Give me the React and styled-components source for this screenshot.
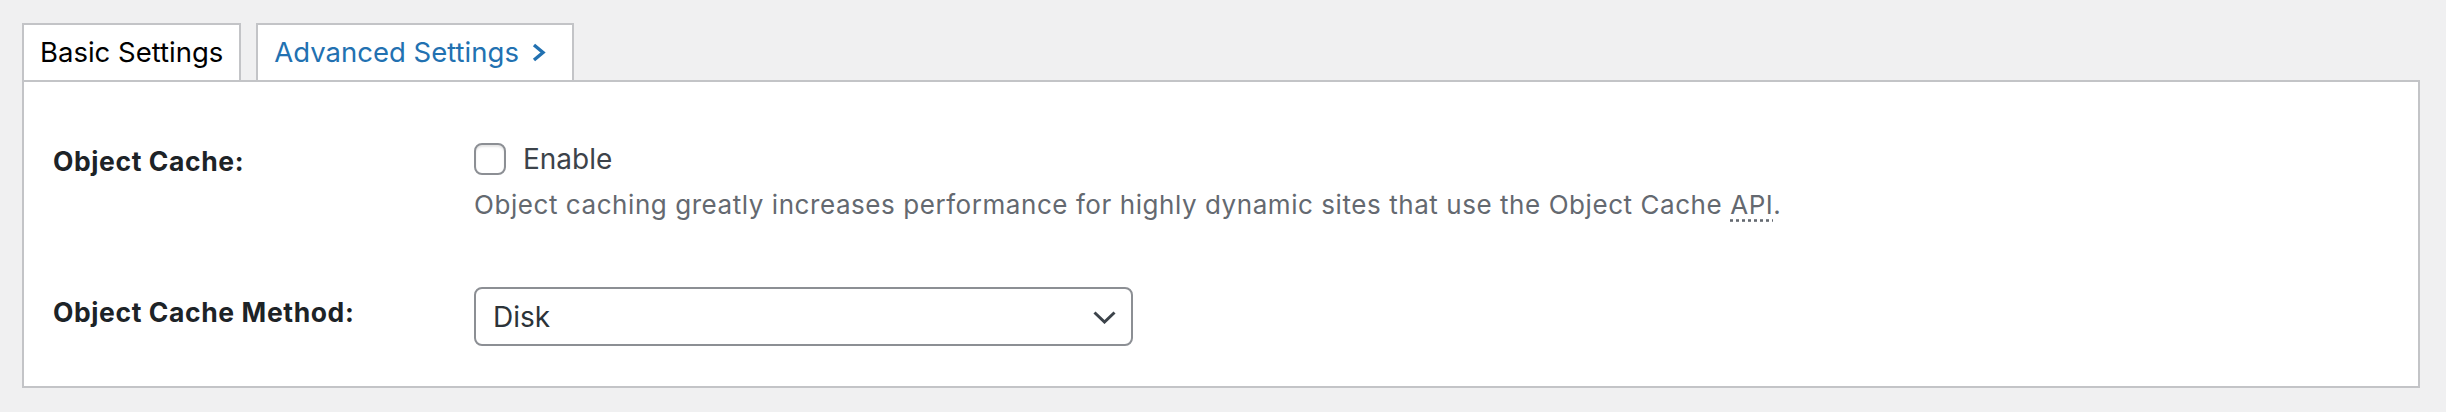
import styled, { createGlobalStyle } from 'styled-components';

const GlobalStyle = createGlobalStyle`
  html, body {
    margin: 0;
    background: #f0f0f1;
  }
  body {
    font-family: Inter, "Liberation Sans", sans-serif;
    color: #3c434a;
  }
`;

const Page = styled.div`
  padding: 23px 26px 24px 22px;
`;

const TabBar = styled.nav`
  display: flex;
  gap: 15px;
  align-items: flex-end;
`;

const Tab = styled.a`
  display: flex;
  align-items: center;
  gap: 12px;
  height: 55px;
  padding: 0 ${p => (p.$withArrow ? '26px' : '16px')} 0 16px;
  background: #fff;
  border: 2px solid #c3c4c7;
  border-bottom: none;
  font-size: 27.5px;
  line-height: 1;
  text-decoration: none;
  color: ${p => (p.$active ? '#000' : '#2271b1')};
  cursor: pointer;
`;

const Panel = styled.section`
  background: #fff;
  border: 2px solid #c3c4c7;
  padding: 61px 29px 40px;
`;

const FormRow = styled.div`
  display: grid;
  grid-template-columns: 421px 1fr;
  align-items: start;

  & + & {
    margin-top: 65px;
  }
`;

const Label = styled.label`
  padding-top: ${p => p.$offset || 0}px;
  font-size: 26.5px;
  line-height: 34px;
  font-weight: 700;
  letter-spacing: 0.6px;
  color: #1d2327;
`;

const Field = styled.div`
  display: flex;
  flex-direction: column;
`;

const CheckLine = styled.label`
  display: flex;
  align-items: center;
  gap: 17px;
  font-size: 28px;
  line-height: 32px;
  color: #3c434a;
`;

const Checkbox = styled.input.attrs({ type: 'checkbox' })`
  appearance: none;
  margin: 0;
  width: 32px;
  height: 32px;
  border: 2px solid #8c8f94;
  border-radius: 8px;
  background: #fff;
  box-shadow: inset 0 2px 2px rgba(0, 0, 0, 0.1);
`;

const Description = styled.p`
  margin: 13px 0 0;
  font-size: 26px;
  line-height: 34px;
  letter-spacing: 0.56px;
  color: #646970;

  abbr {
    text-decoration: underline dotted;
    text-underline-offset: 5px;
  }
`;

const SelectWrap = styled.div`
  position: relative;
  width: 659px;
`;

const Select = styled.select`
  appearance: none;
  width: 100%;
  height: 59px;
  padding: 0 60px 0 17px;
  border: 2px solid #8c8f94;
  border-radius: 8px;
  background: #fff;
  font-family: inherit;
  font-size: 28px;
  color: #2c3338;
`;

const SelectArrow = styled.svg`
  position: absolute;
  right: 17px;
  top: 24px;
  pointer-events: none;
`;

export default function App() {
  return (
    <>
      <GlobalStyle />
      <Page>
        <TabBar>
          <Tab $active>Basic Settings</Tab>
          <Tab $withArrow>
            Advanced Settings
            <svg width="15" height="19" viewBox="0 0 15 19">
              <polyline points="3,2 12,9.5 3,17" fill="none" stroke="#2271b1" strokeWidth="3.4" />
            </svg>
          </Tab>
        </TabBar>
        <Panel>
          <FormRow>
            <Label $offset={1}>Object Cache:</Label>
            <Field>
              <CheckLine>
                <Checkbox />
                Enable
              </CheckLine>
              <Description>
                Object caching greatly increases performance for highly dynamic sites that use the Object Cache <abbr title="Application Programming Interface">API</abbr>.
              </Description>
            </Field>
          </FormRow>
          <FormRow>
            <Label $offset={8}>Object Cache Method:</Label>
            <SelectWrap>
              <Select defaultValue="disk">
                <option value="disk">Disk</option>
                <option value="memcached">Memcached</option>
                <option value="redis">Redis</option>
              </Select>
              <SelectArrow width="23" height="13" viewBox="0 0 23 13">
                <polyline points="1.5,1.5 11.5,11 21.5,1.5" fill="none" stroke="#3c434a" strokeWidth="3" />
              </SelectArrow>
            </SelectWrap>
          </FormRow>
        </Panel>
      </Page>
    </>
  );
}
